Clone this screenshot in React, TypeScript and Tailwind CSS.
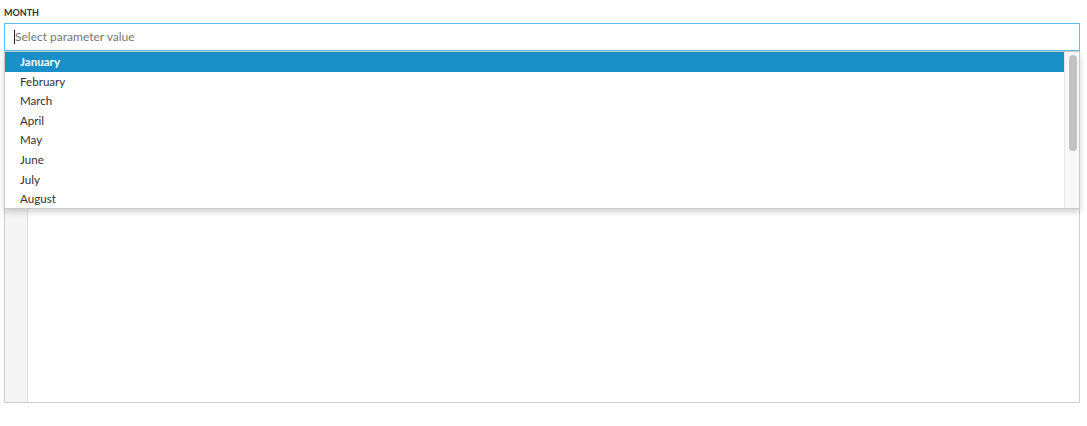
const months = ['January', 'February', 'March', 'April', 'May', 'June', 'July', 'August', 'September', 'October', 'November', 'December'];

const ParameterSelect = () => {
  return (
    <div className="relative z-10">
      <div className="flex items-center h-[28px] border border-[#5cc0f0] bg-white pl-[9px]">
        <span className="w-px h-[14px] bg-[#222]" />
        <span className="text-[12px] text-[#777]">Select parameter value</span>
      </div>

      {/* open dropdown */}
      <div className="absolute left-0 top-full w-[1076px] h-[158px] bg-white border border-[#c8c8c8] shadow-[0_3px_6px_rgba(0,0,0,0.18)] flex overflow-hidden">
        <ul className="flex-1">
          {months.map((m, i) => (
            <li
              key={m}
              className={`h-[19.6px] pl-[15px] flex items-center text-[11.6px] ${
                i === 0 ? 'bg-[#1a90c9] text-white font-bold' : 'text-[#333]'
              }`}
            >
              {m}
            </li>
          ))}
        </ul>
        <div className="w-[15px] bg-[#f8f8f8] border-l border-[#e6e6e6] pt-[3px] pl-[4px]">
          <div className="w-[8px] h-[96px] rounded-full bg-[#c2c2c2]" />
        </div>
      </div>
    </div>
  );
};

export default function App() {
  return (
    <div className="h-[426px] bg-white px-[4px] pt-[7px] pr-[7px] font-['Lato','Liberation_Sans',sans-serif]">
      <div className="text-[9px] font-bold text-[#333] leading-[11px] mb-[5px]">MONTH</div>
      <ParameterSelect />

      <div className="text-[9px] font-bold text-[#333] leading-[11px] mt-[40px] mb-[4px]">QUERY</div>
      <div className="flex h-[297px] border border-[#cfcfcf]">
        <div className="w-[23px] bg-[#f5f5f5] border-r border-[#e0e0e0]" />
        <div className="flex-1 bg-white" />
      </div>
    </div>
  );
}
